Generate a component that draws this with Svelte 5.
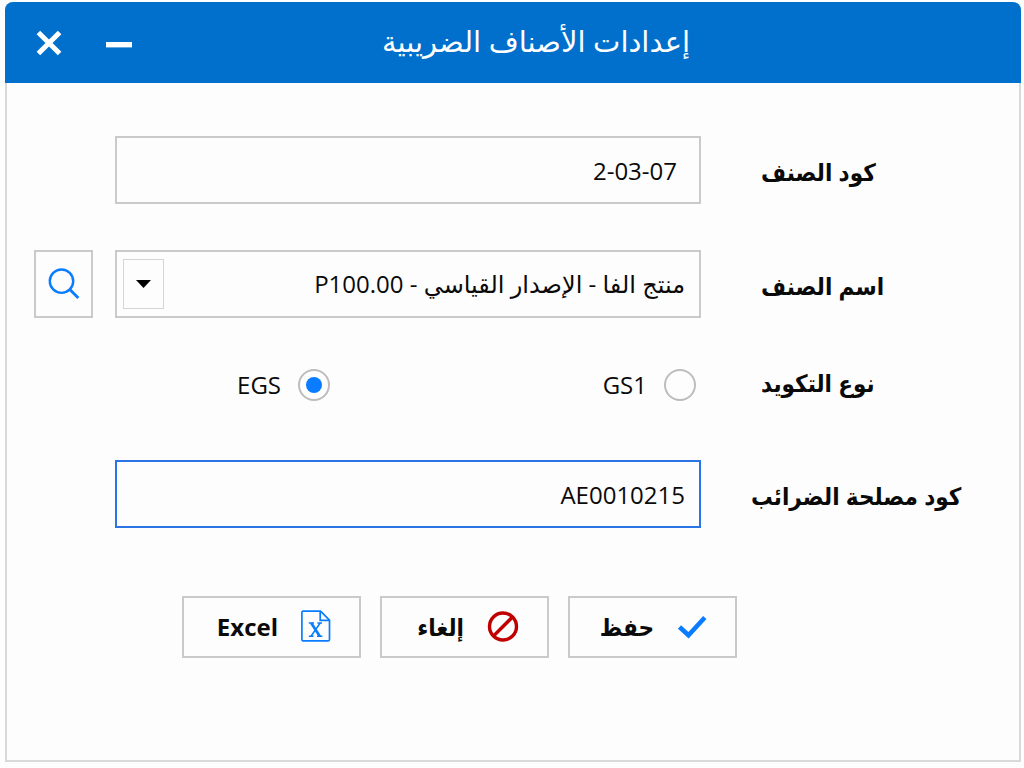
<script>
  let itemCode = $state('2-03-07');
  let itemName = $state('alpha');
  let coding = $state('EGS');
  let taxCode = $state('AE0010215');

  const items = [{ id: 'alpha', label: 'منتج الفا - الإصدار القياسي - P100.00' }];
  const codings = ['GS1', 'EGS'];
</script>

<main class="window" dir="rtl">
  <header class="titlebar">
    <h1>إعدادات الأصناف الضريبية</h1>
    <div class="controls">
      <button type="button" class="control" aria-label="تصغير">
        <svg width="26" height="26" viewBox="0 0 26 26"><path d="M0 14.7H26" stroke="#fff" stroke-width="5.4" /></svg>
      </button>
      <button type="button" class="control" aria-label="إغلاق">
        <svg width="26" height="26" viewBox="0 0 26 26"><path d="M2.4 2.4L23.6 23.6M23.6 2.4L2.4 23.6" stroke="#fff" stroke-width="5" /></svg>
      </button>
    </div>
  </header>

  <form class="body" onsubmit={(e) => e.preventDefault()}>
    <div class="row">
      <label class="caption" for="item-code">كود الصنف</label>
      <input class="box code" id="item-code" type="text" dir="ltr" bind:value={itemCode} />
    </div>

    <div class="row">
      <label class="caption" for="item-name">اسم الصنف</label>
      <div class="picker">
        <select class="box" id="item-name" bind:value={itemName}>
          {#each items as item (item.id)}
            <option value={item.id}>{item.label}</option>
          {/each}
        </select>
        <span class="arrow" aria-hidden="true">
          <svg width="15" height="8" viewBox="0 0 15 8"><path d="M0 0H15L7.5 8Z" fill="#000" /></svg>
        </span>
      </div>
      <button type="button" class="search" aria-label="بحث">
        <svg width="32" height="32" viewBox="0 0 32 32" fill="none" stroke="#0a7cff">
          <circle cx="13.5" cy="13.2" r="11.7" stroke-width="2.4" />
          <path d="M21.8 21.5L30.3 30" stroke-width="2.8" />
        </svg>
      </button>
    </div>

    <div class="row short" role="radiogroup" aria-labelledby="coding-caption">
      <span class="caption" id="coding-caption">نوع التكويد</span>
      <div class="choices">
        {#each codings as name (name)}
          <label class="choice">
            <input type="radio" name="coding" value={name} bind:group={coding} />
            <span>{name}</span>
          </label>
        {/each}
      </div>
    </div>

    <div class="row">
      <label class="caption long" for="tax-code">كود مصلحة الضرائب</label>
      <input class="box active" id="tax-code" type="text" dir="ltr" bind:value={taxCode} />
    </div>

    <div class="actions">
      <button type="submit" class="action">
        <svg width="30" height="30" viewBox="0 0 30 30" fill="none"><path d="M2.5 15L11.5 23.3L27.8 5.5" stroke="#0a7cff" stroke-width="4.6" /></svg>
        <span>حفظ</span>
      </button>
      <button type="button" class="action">
        <svg width="32" height="32" viewBox="0 0 32 32" fill="none" stroke="#c00000" stroke-width="3.4">
          <circle cx="16" cy="15.5" r="13.5" />
          <path d="M6.5 25L25.5 6" />
        </svg>
        <span>إلغاء</span>
      </button>
      <button type="button" class="action excel">
        <svg width="30" height="34" viewBox="0 0 30 34" fill="none" stroke="#0a7cff">
          <path d="M2 1.2H19.5L28.5 10.2V29.6Q28.5 30.8 27.3 30.8H2Q0.9 30.8 0.9 29.6V2.4Q0.9 1.2 2 1.2Z" stroke-width="1.7" />
          <path d="M19.2 1.2V10.3H28.5" stroke-width="1.7" />
          <path d="M10.2 13L18.8 26.2" stroke-width="2.6" />
          <path d="M19.2 13L10 26.2M7.8 12.9H13M16.4 12.9H21M7.8 26.3H12.6M16 26.3H21.4" stroke-width="1.5" />
        </svg>
        <span>Excel</span>
      </button>
    </div>
  </form>
</main>

<style>
  :global(body) {
    margin: 0;
    background: #fdfdfd;
  }

  .window {
    box-sizing: border-box;
    min-height: calc(100vh - 8px);
    margin: 2px 3px 6px 5px;
    display: flex;
    flex-direction: column;
    border: 2px solid #d9d9d9;
    border-top: 0;
    border-radius: 8px 8px 0 0;
    background: #fdfdfd;
    color: #0a0a0a;
    font: 24px/32px "Open Sans", "DejaVu Sans", sans-serif;
  }

  button,
  input,
  select {
    box-sizing: border-box;
    margin: 0;
    font: inherit;
    color: inherit;
  }

  svg {
    display: block;
    flex: none;
  }

  .titlebar {
    display: grid;
    grid-template-columns: 1fr auto 1fr;
    align-items: center;
    height: 81px;
    margin: 0 -2px;
    padding: 0 31px;
    border-radius: 8px 8px 0 0;
    background: #0070cc;
    color: #fff;
  }

  h1 {
    grid-column: 2;
    margin: 0;
    padding: 0 0 4px 46px;
    font-size: 29px;
    font-weight: 400;
  }

  .controls {
    display: flex;
    justify-content: flex-end;
    gap: 44px;
  }

  .control {
    padding: 0;
    border: 0;
    background: none;
  }

  .body {
    padding: 53px 0 48px 27px;
  }

  .row {
    display: grid;
    grid-template-columns: 318px 1fr 59px;
    align-items: center;
    min-height: 68px;
    margin-bottom: 46px;
  }

  .row.short {
    min-height: 42px;
    margin-bottom: 54px;
  }

  .caption {
    padding: 4px 0 0 60px;
    font-family: "Open Sans", "DejaVu Sans Condensed", "DejaVu Sans", sans-serif;
    font-weight: 700;
    text-align: left;
    white-space: nowrap;
  }

  .caption.long {
    padding-left: 50px;
  }

  .short .caption {
    padding: 0 0 4px 60px;
  }

  .box {
    width: 100%;
    height: 68px;
    padding: 0 14px;
    border: 2px solid #cacaca;
    border-radius: 0;
    outline: 0;
    background: #fdfdfd;
    text-align: right;
    appearance: none;
  }

  .row > .box,
  .picker,
  .choices {
    width: auto;
    margin-left: 22px;
  }

  .box.code {
    padding-right: 22px;
  }

  .box.active {
    border-color: #2b74e6;
  }

  .picker {
    display: grid;
    align-items: center;
  }

  .picker > * {
    grid-area: 1 / 1;
  }

  .arrow {
    box-sizing: border-box;
    display: grid;
    place-items: center;
    justify-self: end;
    width: 41px;
    height: 50px;
    margin-left: 8px;
    border: 1px solid #d4d4d4;
    pointer-events: none;
  }

  .search {
    display: grid;
    place-items: center;
    height: 68px;
    padding: 0;
    border: 2px solid #cacaca;
    background: #fdfdfd;
  }

  .choices {
    display: grid;
    grid-template-columns: 366px 1fr;
    padding-right: 5px;
  }

  .choice {
    display: flex;
    align-items: center;
    justify-self: start;
    gap: 17px;
  }

  .choice input {
    display: grid;
    place-items: center;
    width: 32px;
    height: 32px;
    border: 2px solid #bdbdbd;
    border-radius: 50%;
    background: #fdfdfd;
    appearance: none;
  }

  .choice input:checked::before {
    content: "";
    width: 16px;
    height: 16px;
    border-radius: 50%;
    background: #0a7cff;
  }

  .actions {
    display: flex;
    gap: 19px;
    padding: 22px 282px 0 0;
  }

  .action {
    display: flex;
    align-items: center;
    gap: 23px;
    width: 169px;
    height: 62px;
    padding: 0 28px;
    border: 2px solid #cacaca;
    background: #fdfdfd;
    font-family: "Open Sans", "DejaVu Sans Condensed", "DejaVu Sans", sans-serif;
    font-weight: 700;
  }

  .action.excel {
    width: 179px;
  }
</style>
